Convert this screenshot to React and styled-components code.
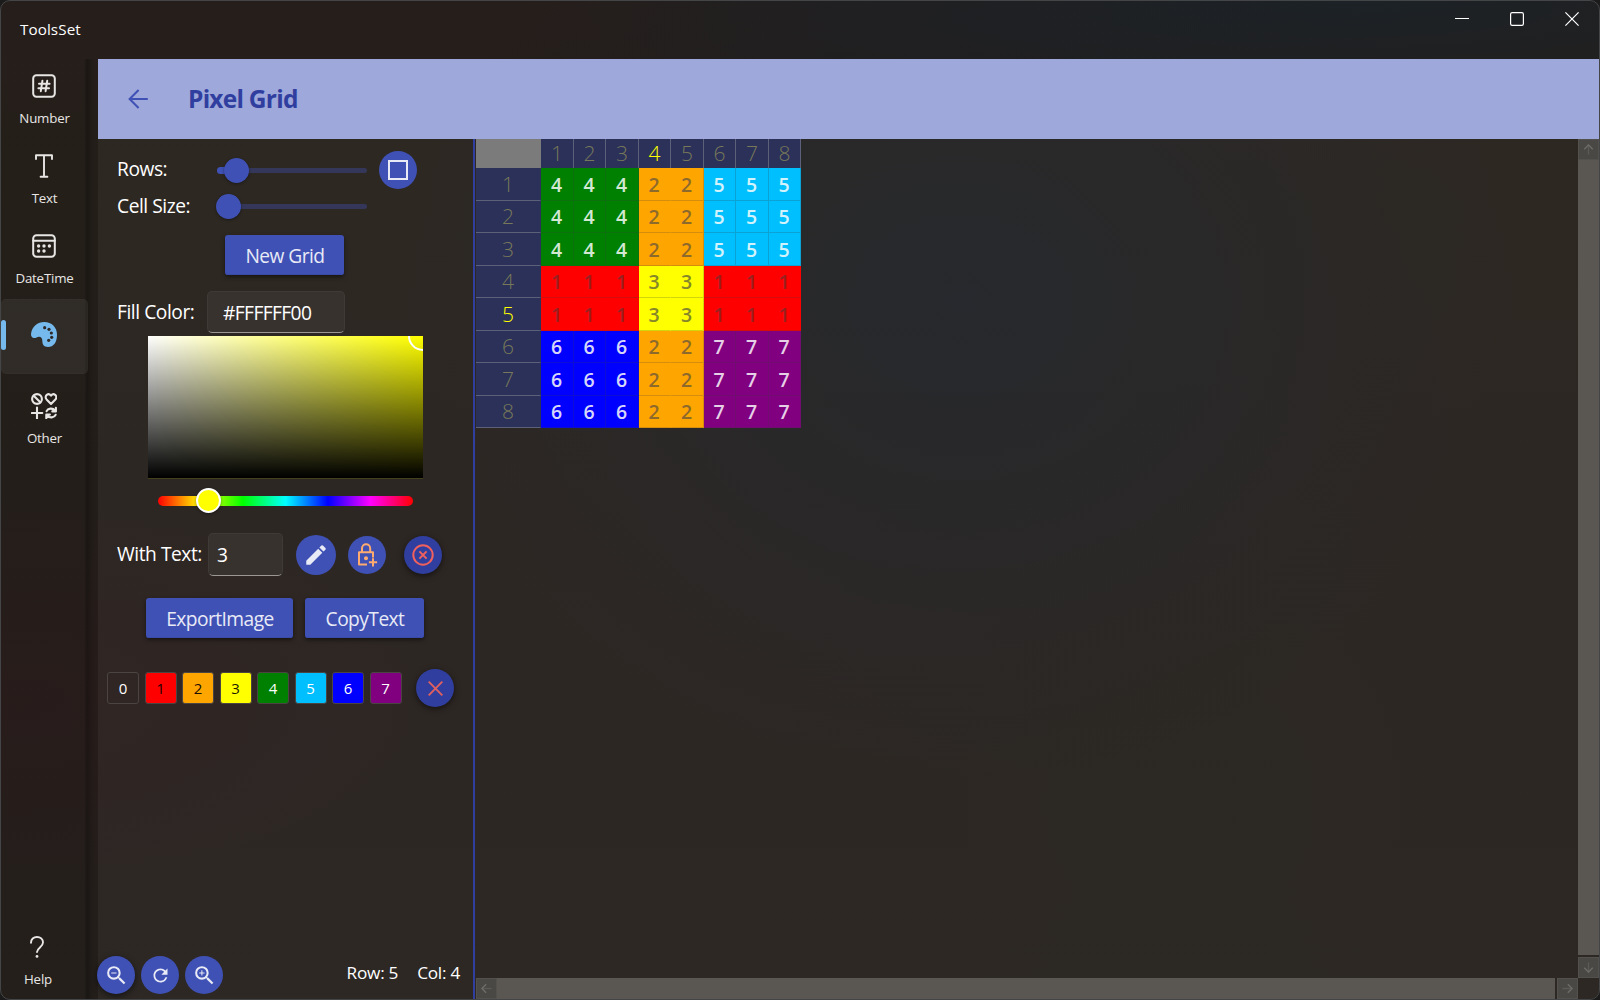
import React from 'react';
import styled, { createGlobalStyle, css } from 'styled-components';
import { MdEdit, MdZoomOut, MdZoomIn, MdRefresh } from 'react-icons/md';

const Global = createGlobalStyle`
  *, *::before, *::after { box-sizing: border-box; }
  html, body { margin: 0; padding: 0; background: #1b1b1b; overflow: hidden; }
  body { font-family: "Open Sans", "Noto Sans", sans-serif; color: #fff; }
  svg { display: block; flex: none; }
`;

const indigo = '#3f51b5';
const indigoDark = '#303f9f';

const Window = styled.div`
  width: 1600px;
  height: 1000px;
  display: flex;
  flex-direction: column;
  border: 1px solid #444546;
  border-radius: 10px;
  overflow: hidden;
  background:
    radial-gradient(ellipse 560px 480px at 960px 300px, rgba(28, 32, 38, 0.85), transparent),
    radial-gradient(ellipse 800px 130px at 1350px 0, rgba(27, 34, 39, 0.95), transparent),
    radial-gradient(ellipse 420px 420px at 1180px 800px, rgba(34, 31, 25, 0.8), transparent),
    radial-gradient(ellipse 420px 200px at 20px 700px, rgba(40, 28, 27, 0.9), transparent),
    linear-gradient(180deg, #261e1b 0, #241f19 200px, #241e1a 500px, #241e1b 750px, #241f1b 100%);
`;

const TitleBar = styled.header`
  height: 58px;
  flex: none;
  display: flex;
  justify-content: space-between;
  padding-left: 19px;
`;

const AppName = styled.div`
  font-size: 15.2px;
  line-height: 20px;
  padding-top: 18px;
  letter-spacing: 0.1px;
`;

const Caption = styled.div`
  display: flex;
  gap: 41px;
  padding: 11px 20px 0 0;
`;

const Body = styled.div`
  flex: 1;
  min-height: 0;
  display: flex;
`;

const Sidebar = styled.nav`
  width: 97px;
  flex: none;
  display: flex;
  flex-direction: column;
  background: linear-gradient(90deg, transparent 83px, rgba(0, 0, 0, 0.28) 86px, rgba(0, 0, 0, 0.08) 91px, transparent);
`;

const NavItem = styled.div`
  width: 87px;
  height: ${p => p.$h || 80}px;
  padding-right: ${p => p.$shift || 0}px;
  display: flex;
  flex-direction: column;
  align-items: center;
  color: #e8e6e5;
`;

const NavIcon = styled.span`
  height: 26px;
  margin: 14px 2px 0 0;
  display: flex;
  align-items: center;
`;

const NavLabel = styled.span`
  font-size: 13.3px;
  line-height: 18px;
  margin-top: 10px;
  letter-spacing: -0.2px;
`;

const ActiveItem = styled.div`
  width: 87px;
  height: 75px;
  margin: 0 0 5px;
  border: 1px solid rgba(255, 255, 255, 0.02);
  border-radius: 5px;
  background: rgba(255, 255, 255, 0.06);
  display: flex;
  align-items: center;
  padding-bottom: 4px;
`;

const Pill = styled.span`
  width: 5px;
  height: 30px;
  border-radius: 3px;
  background: #76b9ed;
  margin: 0 25px 0 -1px;
`;

const Spacer = styled.div`
  flex: 1;
`;

const Main = styled.main`
  flex: 1;
  min-width: 0;
  display: flex;
  flex-direction: column;
  background: rgba(255, 255, 255, 0.045);
`;

const PageHeader = styled.div`
  height: 80px;
  flex: none;
  display: flex;
  align-items: center;
  padding-left: 30px;
  gap: 40px;
  background: #9fa8da;
`;

const Heading = styled.h1`
  margin: 0;
  font-size: 24.5px;
  font-weight: 700;
  line-height: 34px;
  letter-spacing: -0.75px;
  color: ${indigoDark};
`;

const Work = styled.div`
  flex: 1;
  min-height: 0;
  display: flex;
`;

const Panel = styled.section`
  width: 377px;
  flex: none;
  display: flex;
  flex-direction: column;
  border-right: 2px solid ${indigoDark};
`;

const Row = styled.div`
  height: ${p => p.$h}px;
  margin-top: ${p => p.$top || 0}px;
  padding-left: ${p => p.$left || 0}px;
  display: flex;
  flex: none;
  align-items: center;
`;

const Label = styled.span`
  width: ${p => p.$w}px;
  flex: none;
  font-size: 19.2px;
  line-height: 26px;
  letter-spacing: -0.45px;
  white-space: nowrap;
  padding-bottom: ${p => p.$lift || 1}px;
`;

const Track = styled.div`
  position: relative;
  width: 150px;
  height: 5px;
  flex: none;
  border-radius: 3px;
  background: #34375a;
`;

const Filled = styled.div`
  position: absolute;
  left: 0;
  top: -1px;
  width: 20px;
  height: 7px;
  border-radius: 4px;
  background: ${indigo};
`;

const Thumb = styled.div`
  position: absolute;
  left: ${p => p.$x}px;
  top: ${p => p.$y}px;
  width: 25px;
  height: 25px;
  border-radius: 50%;
  background: ${p => p.$fill || indigo};
  border: ${p => (p.$ring ? '2px solid #fff' : 'none')};
  box-shadow: 0 1px 3px rgba(0, 0, 0, 0.4);
`;

const Round = styled.button`
  width: ${p => p.$d || 38}px;
  height: ${p => p.$d || 38}px;
  margin: 0 0 0 ${p => p.$ml || 0}px;
  padding: 0;
  flex: none;
  border: 0;
  border-radius: 50%;
  display: flex;
  align-items: center;
  justify-content: center;
  color: #e8eaf6;
  background: ${p => (p.$dark ? indigoDark : indigo)};
  ${p => p.$raised && css`box-shadow: 0 2px 6px rgba(0, 0, 0, 0.55);`}
`;

const Raised = styled.button`
  width: ${p => p.$w}px;
  height: 40px;
  padding: 1px 0 0 1px;
  border: 0;
  border-radius: 3px;
  background: ${indigo};
  color: #e8eaf6;
  font: 19.2px/26px "Open Sans", sans-serif;
  letter-spacing: -0.55px;
  box-shadow: 0 2px 4px rgba(0, 0, 0, 0.5), inset 0 -1px 0 #3a4aa8;
`;

const Field = styled.div`
  width: ${p => p.$w}px;
  height: ${p => p.$h || 42}px;
  padding: 1px 0 0 ${p => p.$pad}px;
  flex: none;
  display: flex;
  align-items: center;
  border: 1px solid #403a37;
  border-bottom-color: #9a9795;
  border-radius: 5px;
  background: #38322f;
  font-size: 19.2px;
  line-height: 26px;
  letter-spacing: -0.6px;
`;

const Spectrum = styled.div`
  position: relative;
  overflow: hidden;
  width: 275px;
  height: 143px;
  margin: 3px 0 0 50px;
  flex: none;
  border-bottom: 1px solid #45411c;
  background:
    linear-gradient(180deg, transparent, #000),
    linear-gradient(90deg, #fff, #ff0);
`;

const SpectrumDot = styled.div`
  position: absolute;
  right: -15px;
  top: -15px;
  width: 30px;
  height: 30px;
  border: 2.5px solid #fff;
  border-radius: 50%;
`;

const Hue = styled.div`
  position: relative;
  width: 255px;
  height: 10px;
  margin: 17px 0 0 60px;
  flex: none;
  border-radius: 5px;
  background: linear-gradient(90deg, #f00, #ff0 16.67%, #0f0 33.33%, #0ff 50%, #00f 66.67%, #f0f 83.33%, #f00);
`;

const Swatch = styled.div`
  width: 32px;
  height: 32px;
  border: 1px solid #4a4543;
  border-radius: 3px;
  display: flex;
  align-items: center;
  justify-content: center;
  font-size: 15px;
  line-height: 20px;
  color: ${p => p.$ink};
  background: ${p => p.$bg};
`;

const Group = styled.div`
  display: flex;
  gap: ${p => p.$gap}px;
`;

const Status = styled.div`
  flex: 1;
  display: flex;
  justify-content: flex-end;
  gap: 19px;
  padding: 0 13px 5px 0;
  font-size: 17.2px;
  line-height: 24px;
  letter-spacing: -0.25px;
`;

const Board = styled.section`
  flex: 1;
  min-width: 0;
  padding-left: 1px;
  display: grid;
  grid-template-columns: 1fr 21px;
  grid-template-rows: 1fr 21px;
`;

const Sheet = styled.div`
  display: grid;
  align-content: start;
  grid-template-columns: 65px repeat(4, 33px 32px);
  grid-template-rows: 29px repeat(4, 33px 32px);
`;

const Corner = styled.div`
  background: #7b7b7b;
`;

const Head = styled.div`
  display: flex;
  align-items: center;
  justify-content: center;
  background: #2b3158;
  border-right: 1px solid ${p => (p.$side ? '#2b3158' : '#5c6079')};
  border-bottom: ${p => (p.$side ? '1px solid #5c6079' : 'none')};
  color: ${p => (p.$on ? '#ffff00' : '#77785a')};
  font: 300 21px/26px "Open Sans", sans-serif;
  padding-bottom: 1px;
`;

const Cell = styled.div`
  display: flex;
  align-items: center;
  justify-content: center;
  padding: 1px 1px 0 0;
  background: ${p => p.$bg};
  color: ${p => p.$ink};
  border-right: 1px solid ${p => (p.$merge ? p.$bg : 'rgba(60, 60, 60, 0.22)')};
  border-bottom: 1px solid rgba(60, 60, 60, 0.22);
  background-clip: border-box;
  font-size: 19.5px;
  line-height: 26px;
  font-weight: 600;
`;

const VBar = styled.div`
  display: flex;
  flex-direction: column;
`;

const HBar = styled.div`
  display: flex;
`;

const BarButton = styled.div`
  width: 21px;
  height: 21px;
  flex: none;
  display: flex;
  align-items: center;
  justify-content: center;
  background: #4a4845;
  border: 1px solid #53514e;
  color: #6f6d6a;
`;

const BarThumb = styled.div`
  flex: 1;
  background: #5a5651;
  margin: ${p => (p.$v ? '0 0 2px' : '0 2px 0 0')};
`;

const strokeProps = { fill: 'none', stroke: 'currentColor', strokeLinecap: 'round', strokeLinejoin: 'round' };

const NumberIcon = () => (
  <svg width="24" height="24" viewBox="0 0 24 24" {...strokeProps} strokeWidth="2">
    <rect x="1.2" y="1.2" width="21.6" height="21.6" rx="3.2" />
    <path d="M10.400 6.800 8.800 17.200M15.200 6.800l-1.600 10.400M7 9.800h10.600M6.400 14.200h10.600" />
  </svg>
);

const TextIcon = () => (
  <svg width="18" height="24" viewBox="0 0 18 24" {...strokeProps} strokeWidth="1.900">
    <path d="M1 5V1.200h16V5M9 1.200v21.600M5.600 22.800h6.800" />
  </svg>
);

const DateIcon = () => (
  <svg width="24" height="24" viewBox="0 0 24 24" {...strokeProps} strokeWidth="2">
    <rect x="1.2" y="1.2" width="21.6" height="21.6" rx="3.4" />
    <path d="M1.200 6.800h21.600" />
    <g fill="currentColor" stroke="none">
      <circle cx="6.600" cy="12" r="1.700" /><circle cx="12" cy="12" r="1.700" /><circle cx="17.400" cy="12" r="1.700" />
      <circle cx="6.600" cy="17" r="1.700" /><circle cx="12" cy="17" r="1.700" />
    </g>
  </svg>
);

const PaletteIcon = () => (
  <svg width="26" height="25" viewBox="0 0 78 75">
    <path fill="#76b9ed" d="M0 36C2 14 20 0 40 0c22 0 38 16 38 38 0 22-10 37-27 37-13 0-17-9-17-18 0-8-3-13-10-13-6 0-10 5-16 4-6-1-8-6-8-12z" />
    <g fill="#2f2a27">
      <circle cx="41" cy="17" r="4.8" /><circle cx="54" cy="22" r="4.8" /><circle cx="61" cy="33" r="4.8" />
      <circle cx="62" cy="46" r="4.8" /><circle cx="53" cy="55" r="4.8" />
    </g>
  </svg>
);

const OtherIcon = () => (
  <svg width="26" height="26" viewBox="0 0 26 26" {...strokeProps} strokeWidth="2.100">
    <circle cx="6" cy="6" r="4.900" />
    <path d="m2.700 2.700 6.600 6.600" />
    <path d="M20 10.900 15.600 6.400c-1.400-1.500-1.100-3.600.2-4.600 1.400-1 3-.7 4.200.8 1.200-1.500 2.800-1.800 4.200-.8 1.300 1 1.600 3.100.2 4.600z" />
    <path d="M6 14.600v10.800M.9 20h10.400" />
    <path d="M15.600 18.200c1.300-3 6-3.600 8.400-.7M24.900 14.700v3.700h-3.600M24.600 21.800c-1.300 3-6 3.600-8.400.7M15.300 25.300v-3.700h3.600" />
  </svg>
);

const HelpIcon = () => (
  <svg width="14" height="22" viewBox="0 0 14 22" {...strokeProps} strokeWidth="1.900">
    <path d="M1 6.800C1 3.200 3.600 1 7 1s6 2.300 6 5.600c0 4.400-6 5.200-6 9.400" />
    <circle cx="7" cy="20.400" r="1.400" fill="currentColor" stroke="none" />
  </svg>
);

const BackIcon = () => (
  <svg width="20" height="20" viewBox="0 0 20 20" fill="none" stroke={indigo} strokeWidth="2">
    <path d="M19.800 10H1.600M10.600 1 1.600 10l9 9" />
  </svg>
);

const SquareIcon = () => (
  <svg width="20" height="20" viewBox="0 0 20 20" fill="none" stroke="currentColor" strokeWidth="2">
    <rect x="1" y="1" width="18" height="18" />
  </svg>
);

const LockPlusIcon = () => (
  <svg width="22" height="24" viewBox="0 0 22 24" fill="none" stroke="#ffab70" strokeWidth="2">
    <path strokeLinejoin="round" d="M11 21.500H3V9.300h14v5.200M6 9.300V5.400a4.100 4.100 0 0 1 8.200 0v3.900" />
    <path d="M17 15.200v8.200M12.900 19.300h8.200" />
    <circle cx="10" cy="15.200" r="2" fill="#ffab70" stroke="none" />
  </svg>
);

const CircleXIcon = () => (
  <svg width="22" height="22" viewBox="0 0 22 22" fill="none" stroke="#f0605d" strokeWidth="2">
    <circle cx="11" cy="11" r="9.700" />
    <path d="m7.400 7.400 7.200 7.200M14.600 7.400l-7.200 7.200" />
  </svg>
);

const CrossIcon = () => (
  <svg width="15" height="15" viewBox="0 0 15 15" fill="none" stroke="#e0605f" strokeWidth="1.900">
    <path d="m.7.7 13.600 13.600M14.300.7.7 14.300" />
  </svg>
);

const Arrow = ({ turn }) => (
  <svg width="11" height="11" viewBox="0 0 11 11" fill="none" stroke="currentColor" strokeWidth="1.300">
    <g transform={`rotate(${turn} 5.500 5.500)`}>
      <path opacity=".5" d="M5.500 10.500V2" />
      <path d="M1.300 5.200l4.200-4.300 4.200 4.300" />
    </g>
  </svg>
);

const palette = [
  { bg: 'transparent', ink: '#fff' },
  { bg: '#ff0000', ink: '#1a0000', cell: '#9a2020' },
  { bg: '#ffa500', ink: '#1a1000', cell: '#8d6a2c' },
  { bg: '#ffff00', ink: '#1a1a00', cell: '#86862a' },
  { bg: '#008000', ink: '#fff', cell: '#d3e8d3' },
  { bg: '#00bfff', ink: '#fff', cell: '#d3f3fc' },
  { bg: '#0000ff', ink: '#fff', cell: '#d6d6fb' },
  { bg: '#800080', ink: '#fff', cell: '#e6d0e6' },
];

const grid = ['44422555', '44422555', '44422555', '11133111', '11133111', '66622777', '66622777', '66622777'];
const numbers = [1, 2, 3, 4, 5, 6, 7, 8];

export default function App() {
  return (
    <>
      <Global />
      <Window>
        <TitleBar>
          <AppName>ToolsSet</AppName>
          <Caption>
            <svg width="14" height="14" viewBox="0 0 14 14" stroke="#fff" strokeWidth="1"><path d="M0 6.500h14" /></svg>
            <svg width="14" height="14" viewBox="0 0 14 14" fill="none" stroke="#fff" strokeWidth="1.200"><rect x=".6" y=".6" width="12.800" height="12.800" rx="1.600" /></svg>
            <svg width="14" height="14" viewBox="0 0 14 14" stroke="#fff" strokeWidth="1.200"><path d="m.4.4 13.200 13.200M13.600.4.4 13.600" /></svg>
          </Caption>
        </TitleBar>
        <Body>
          <Sidebar>
            <NavItem><NavIcon><NumberIcon /></NavIcon><NavLabel>Number</NavLabel></NavItem>
            <NavItem><NavIcon><TextIcon /></NavIcon><NavLabel>Text</NavLabel></NavItem>
            <NavItem><NavIcon><DateIcon /></NavIcon><NavLabel>DateTime</NavLabel></NavItem>
            <ActiveItem><Pill /><PaletteIcon /></ActiveItem>
            <NavItem><NavIcon><OtherIcon /></NavIcon><NavLabel>Other</NavLabel></NavItem>
            <Spacer />
            <NavItem $shift={13} $h={79}><NavIcon><HelpIcon /></NavIcon><NavLabel>Help</NavLabel></NavItem>
          </Sidebar>
          <Main>
            <PageHeader>
              <BackIcon />
              <Heading>Pixel Grid</Heading>
            </PageHeader>
            <Work>
              <Panel>
                <Row $top={12} $h={38} $left={19}>
                  <Label $w={100} $lift={3}>Rows:</Label>
                  <Track><Filled /><Thumb $x={7} $y={-10} /></Track>
                  <Round $ml={12}><SquareIcon /></Round>
                </Row>
                <Row $h={35} $left={19}>
                  <Label $w={100} $lift={2}>Cell Size:</Label>
                  <Track><Thumb $x={-1.5} $y={-10} /></Track>
                </Row>
                <Row $top={11} $h={40} $left={127}>
                  <Raised $w={119}>New Grid</Raised>
                </Row>
                <Row $top={16} $h={42} $left={19}>
                  <Label $w={90}>Fill Color:</Label>
                  <Field $w={138} $pad={15}>#FFFFFF00</Field>
                </Row>
                <Spectrum><SpectrumDot /></Spectrum>
                <Hue><Thumb $x={38} $y={-8} $ring $fill="#ffff00" /></Hue>
                <Row $top={27} $h={43} $left={19}>
                  <Label $w={91}>With Text:</Label>
                  <Field $w={75} $h={43} $pad={8}>3</Field>
                  <Round $ml={12.5} $d={40}><MdEdit size={26} /></Round>
                  <Round $ml={12}><LockPlusIcon /></Round>
                  <Round $ml={18.5} $dark $raised><CircleXIcon /></Round>
                </Row>
                <Row $top={22} $h={40} $left={48}>
                  <Group $gap={12}>
                    <Raised $w={147}>ExportImage</Raised>
                    <Raised $w={119}>CopyText</Raised>
                  </Group>
                </Row>
                <Row $top={31} $h={38} $left={9}>
                  <Group $gap={5.5}>
                    {palette.map((p, i) => <Swatch key={i} $bg={p.bg} $ink={p.ink}>{i}</Swatch>)}
                  </Group>
                  <Round $ml={14.5} $dark $raised><CrossIcon /></Round>
                </Row>
                <Spacer />
                <Row $h={38}>
                  <Round $ml={-1} $raised><MdZoomOut size={25} /></Round>
                  <Round $ml={6}><MdRefresh size={21} /></Round>
                  <Round $ml={6}><MdZoomIn size={25} /></Round>
                  <Status><span>Row: 5</span><span>Col: 4</span></Status>
                </Row>
                <Row $h={5} />
              </Panel>
              <Board>
                <Sheet>
                  <Corner />
                  {numbers.map(n => <Head key={n} $on={n === 4}>{n}</Head>)}
                  {grid.map((line, r) => (
                    <React.Fragment key={r}>
                      <Head $side $on={r === 4}>{r + 1}</Head>
                      {[...line].map((v, c) => (
                        <Cell
                          key={c}
                          $bg={palette[v].bg}
                          $ink={palette[v].cell}
                          $merge={c === 3 || v === '1'}
                        >
                          {v}
                        </Cell>
                      ))}
                    </React.Fragment>
                  ))}
                </Sheet>
                <VBar>
                  <BarButton><Arrow turn={0} /></BarButton>
                  <BarThumb $v />
                  <BarButton><Arrow turn={180} /></BarButton>
                </VBar>
                <HBar>
                  <BarButton><Arrow turn={270} /></BarButton>
                  <BarThumb />
                  <BarButton><Arrow turn={90} /></BarButton>
                </HBar>
              </Board>
            </Work>
          </Main>
        </Body>
      </Window>
    </>
  );
}
